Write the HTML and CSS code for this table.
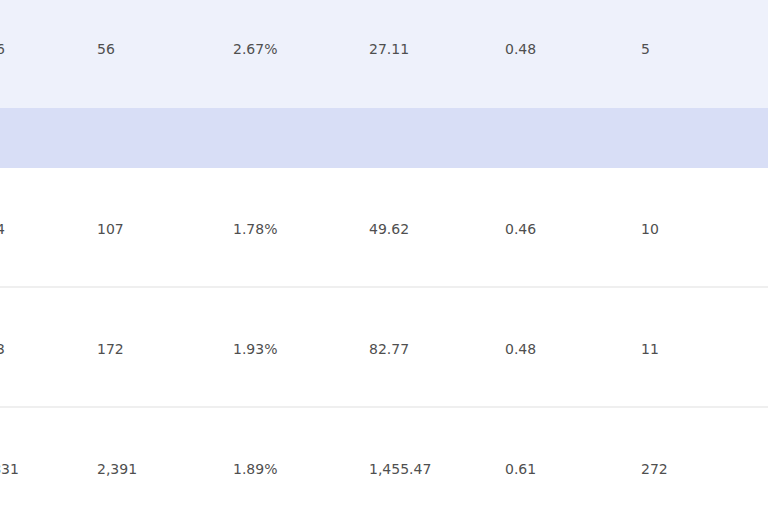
FILE: index.html
```html
<!DOCTYPE html>
<html lang="en">
<head>
<meta charset="utf-8">
<title>Stats table</title>
<link rel="stylesheet" href="styles.css">
</head>
<body>
<table class="stats">
  <tbody>
    <tr class="row row-alt">
      <td>2,096</td><td>56</td><td>2.67%</td><td>27.11</td><td>0.48</td><td>5</td><td></td>
    </tr>
    <tr class="row-band">
      <td></td><td></td><td></td><td></td><td></td><td></td><td></td>
    </tr>
    <tr class="row">
      <td>6,014</td><td>107</td><td>1.78%</td><td>49.62</td><td>0.46</td><td>10</td><td></td>
    </tr>
    <tr class="row">
      <td>8,913</td><td>172</td><td>1.93%</td><td>82.77</td><td>0.48</td><td>11</td><td></td>
    </tr>
    <tr class="row">
      <td>126,831</td><td>2,391</td><td>1.89%</td><td>1,455.47</td><td>0.61</td><td>272</td><td></td>
    </tr>
  </tbody>
</table>
</body>
</html>
```
FILE: styles.css
```css
html, body {
  margin: 0;
  padding: 0;
  background: #ffffff;
  overflow: hidden;
}

.stats {
  border-collapse: collapse;
  table-layout: fixed;
  width: 952px;
  margin-left: -39px;
  margin-top: -11px;
  font-family: "DejaVu Sans", Verdana, sans-serif;
  font-size: 14px;
  color: #4f4f4f;
}

.stats td {
  width: 136px;
  padding: 3px 0 0 0;
  text-align: left;
  vertical-align: middle;
  white-space: nowrap;
  overflow: visible;
}

.stats td:first-child {
  text-align: right;
  padding-right: 92px;
  width: 44px;
}

.row td {
  height: 115px;
  border-bottom: 2px solid #efefef;
}

.row-alt td {
  background: #eef1fb;
  padding-top: 1px;
  height: 118px;
  border-bottom: 0;
}

.row-band td {
  height: 60px;
  padding: 0;
  background: #d8def6;
  border-bottom: 0;
}
```
